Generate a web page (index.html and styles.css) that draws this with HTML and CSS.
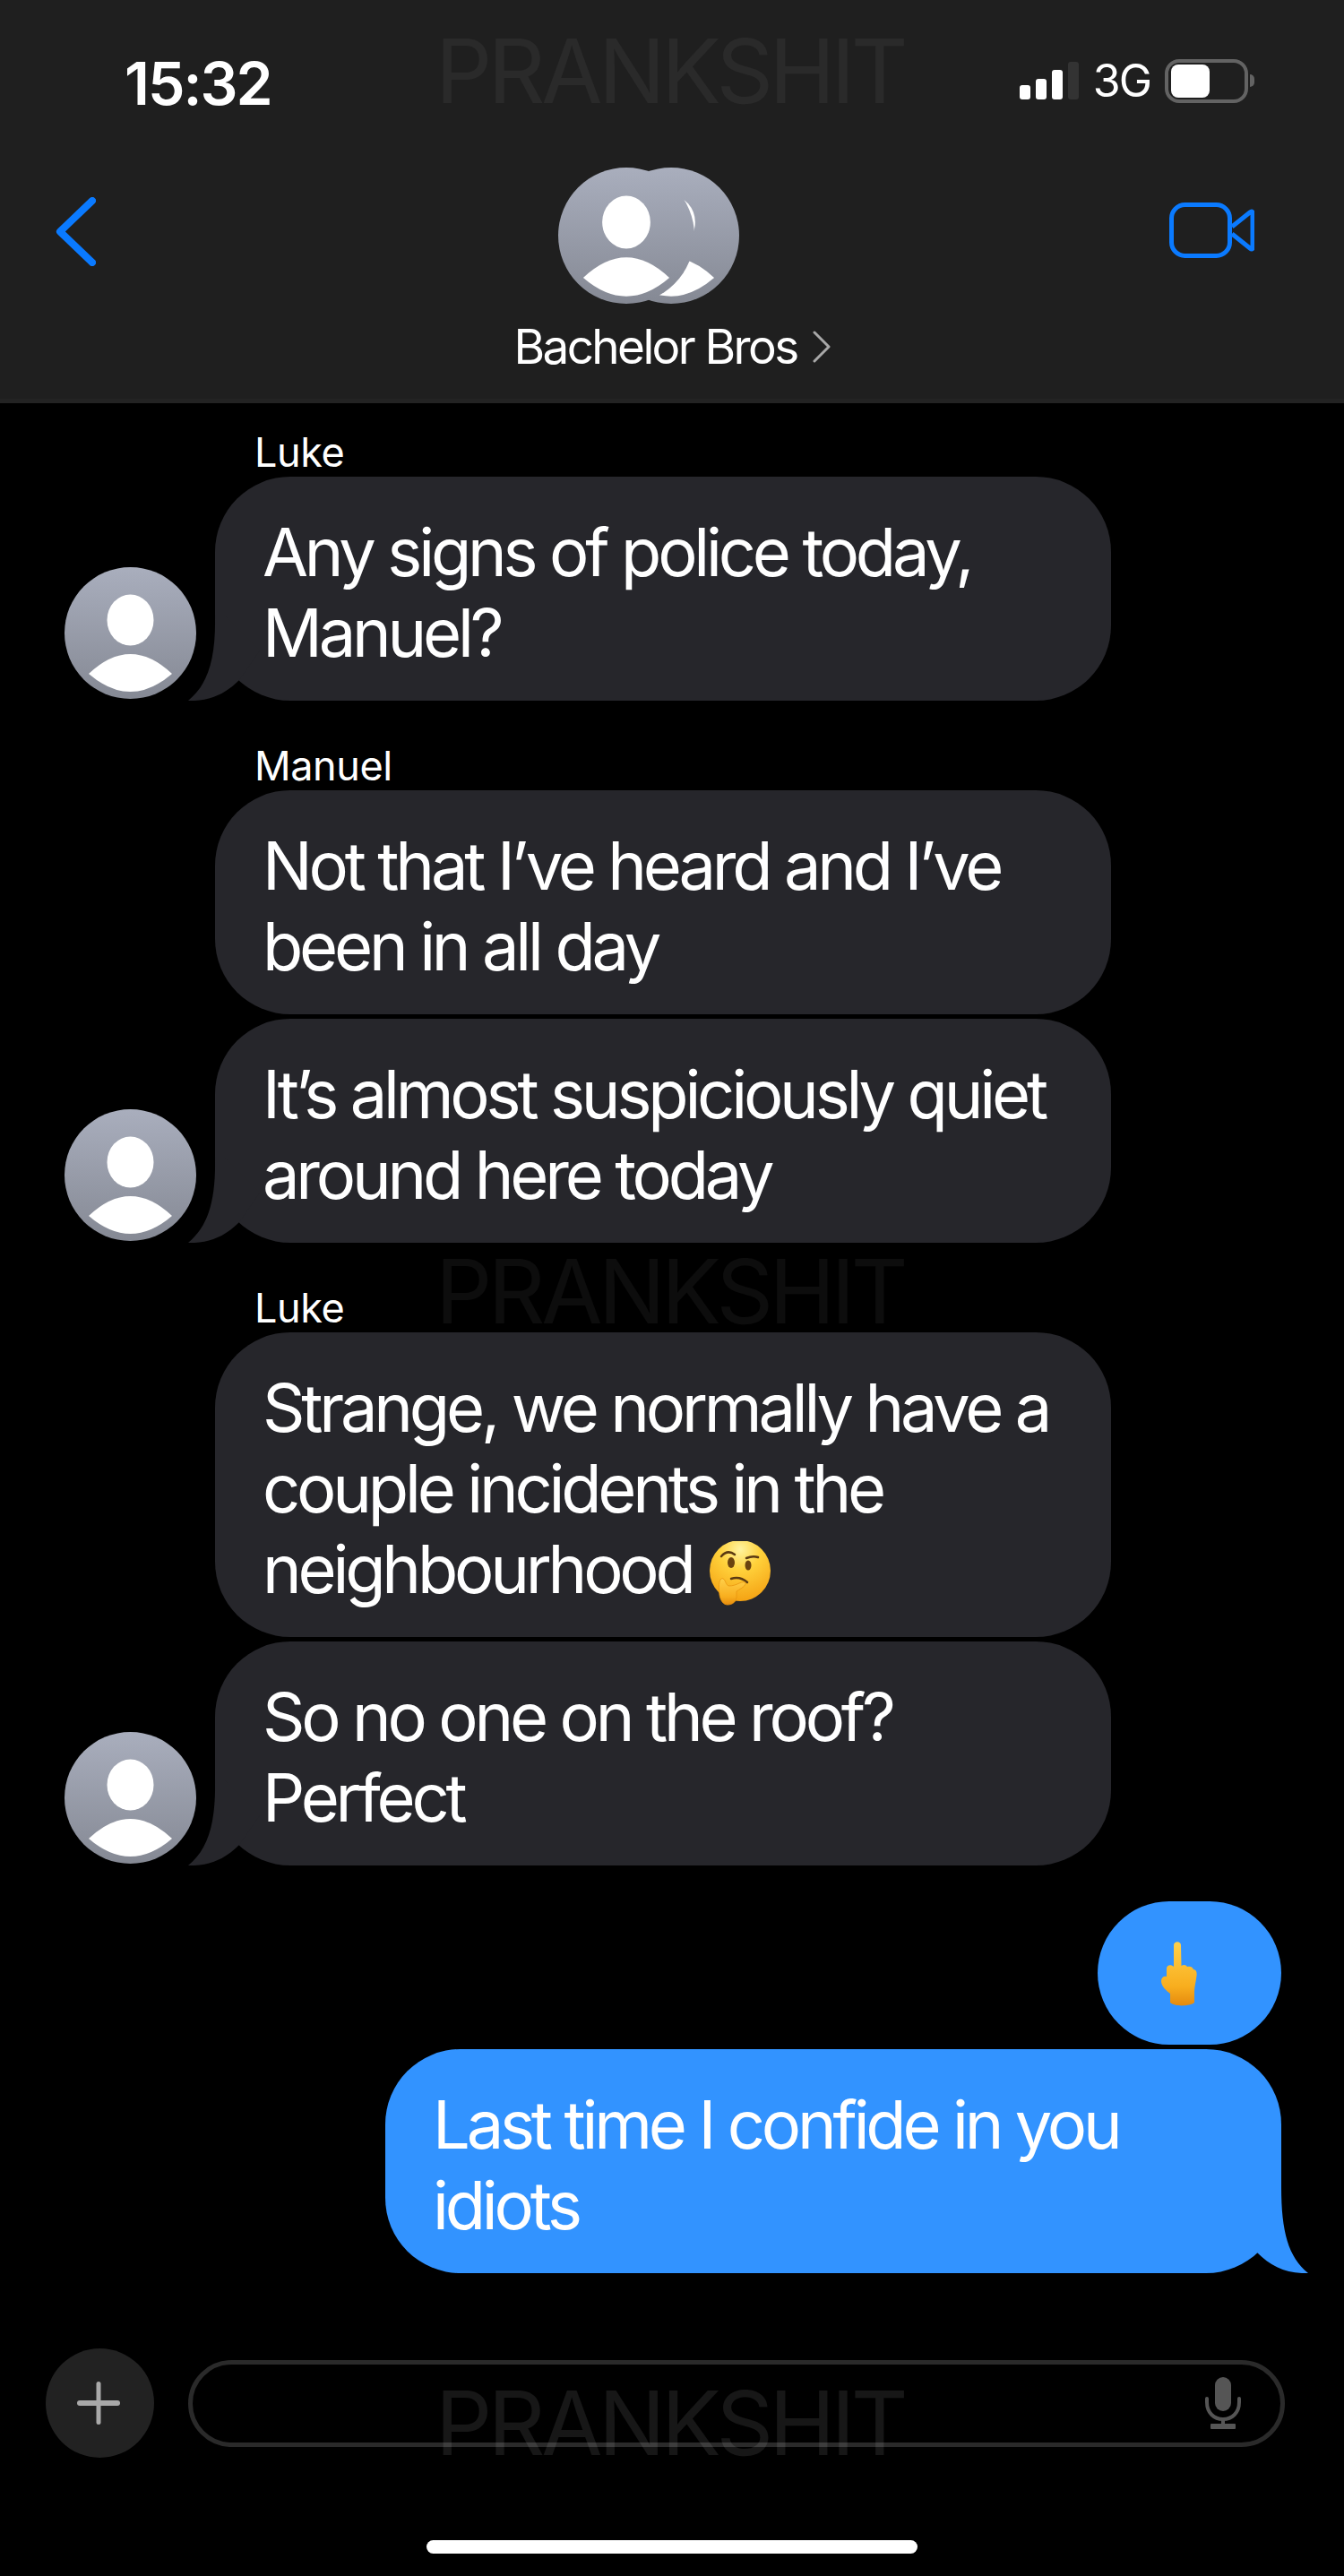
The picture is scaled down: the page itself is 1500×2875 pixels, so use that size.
FILE: index.html
```html
<!DOCTYPE html>
<html lang="en">
<head>
    <meta charset="UTF-8">
    <meta name="viewport" content="width=device-width, initial-scale=1.0">
    <title>Bachelor Bros</title>
    <link rel="stylesheet" href="styles.css">
</head>
<body>
    <svg class="defs" aria-hidden="true">
        <defs>
            <linearGradient id="avatarFill" x1="0" y1="0" x2="0" y2="1">
                <stop offset="0" stop-color="#a9aebd"/>
                <stop offset="1" stop-color="#858994"/>
            </linearGradient>
            <radialGradient id="faceFill" cx="0.5" cy="0.15" r="0.95">
                <stop offset="0" stop-color="#fff3a0"/>
                <stop offset="0.35" stop-color="#ffd23c"/>
                <stop offset="1" stop-color="#f39a0c"/>
            </radialGradient>
            <linearGradient id="handFill" x1="0" y1="0" x2="0" y2="1">
                <stop offset="0" stop-color="#ffd04a"/>
                <stop offset="0.7" stop-color="#f8ae1e"/>
                <stop offset="1" stop-color="#e58a0e"/>
            </linearGradient>
            <symbol id="person" viewBox="0 0 147 147">
                <circle cx="73.5" cy="73.5" r="73.5" fill="url(#avatarFill)"/>
                <ellipse cx="73.5" cy="59" rx="26" ry="28.5" fill="#fff"/>
                <path d="M27 119 Q73.5 75 120 119 Q73.5 159 27 119 Z" fill="#fff"/>
            </symbol>
        </defs>
    </svg>

    <div class="page">
        <div class="watermark wm-top">PRANKSHIT</div>
        <div class="watermark wm-mid">PRANKSHIT</div>
        <div class="watermark wm-bottom">PRANKSHIT</div>

        <header class="header">
            <div class="status-bar">
                <span class="clock">15:32</span>
                <div class="status-right">
                    <div class="signal">
                        <i class="bar bar-1"></i>
                        <i class="bar bar-2"></i>
                        <i class="bar bar-3"></i>
                        <i class="bar bar-4"></i>
                    </div>
                    <span class="network">3G</span>
                    <div class="battery"><div class="battery-level"></div></div>
                    <div class="battery-nub"></div>
                </div>
            </div>
            <div class="nav">
                <svg class="back" viewBox="0 0 45 77">
                    <path d="M41 4 L5 38.500 L41 73" fill="none" stroke="#0a7aff" stroke-width="8" stroke-linecap="round" stroke-linejoin="round"/>
                </svg>
                <div class="contact">
                    <svg class="group-avatar" viewBox="0 0 202 152">
                        <use href="#person" x="50" y="0" width="152" height="152"/>
                        <use href="#person" x="0" y="0" width="152" height="152"/>
                    </svg>
                    <div class="contact-name">
                        Bachelor Bros
                        <svg class="name-chevron" viewBox="0 0 20 36">
                            <path d="M2 2 L18 18 L2 34" fill="none" stroke="#a8a8a8" stroke-width="3" stroke-linecap="round" stroke-linejoin="round"/>
                        </svg>
                    </div>
                </div>
                <svg class="video" viewBox="0 0 95 62">
                    <rect x="2.500" y="2.500" width="65" height="57" rx="15" fill="none" stroke="#0a7aff" stroke-width="5"/>
                    <path d="M70 27 L90 11 Q93 8.500 93 12 L93 50 Q93 53.500 90 51 L70 35" fill="none" stroke="#0a7aff" stroke-width="5" stroke-linejoin="round"/>
                </svg>
            </div>
        </header>

        <main class="messages">
            <section class="group">
                <div class="sender">Luke</div>
                <div class="row">
                    <svg class="avatar"><use href="#person"/></svg>
                    <div class="bubble bubble-in">
                        Any signs of police today,<br>Manuel?
                        <svg class="tail" viewBox="0 0 80 96"><path d="M30 0 C31 50 22 78 0 96 C24 97 42 88 57 73 L80 40 L40 0 Z" fill="#26262b"/></svg>
                    </div>
                </div>
            </section>

            <section class="group">
                <div class="sender">Manuel</div>
                <div class="row row-plain">
                    <div class="bubble bubble-in">Not that I’ve heard and I’ve<br>been in all day</div>
                </div>
                <div class="row">
                    <svg class="avatar"><use href="#person"/></svg>
                    <div class="bubble bubble-in">
                        It’s almost suspiciously quiet<br>around here today
                        <svg class="tail" viewBox="0 0 80 96"><path d="M30 0 C31 50 22 78 0 96 C24 97 42 88 57 73 L80 40 L40 0 Z" fill="#26262b"/></svg>
                    </div>
                </div>
            </section>

            <section class="group">
                <div class="sender">Luke</div>
                <div class="row row-plain">
                    <div class="bubble bubble-in">
                        Strange, we normally have a<br>couple incidents in the<br>neighbourhood
                        <svg class="emoji-think" viewBox="0 0 70 72" role="img" aria-label="thinking face">
                            <circle cx="35" cy="33" r="34" fill="url(#faceFill)"/>
                            <path d="M14 17 Q21 9 29 15" fill="none" stroke="#5b3a12" stroke-width="2.500" stroke-linecap="round"/>
                            <path d="M42 19 Q49 16 55 18" fill="none" stroke="#5b3a12" stroke-width="2.500" stroke-linecap="round"/>
                            <ellipse cx="25" cy="24" rx="4" ry="6" fill="#6b430f"/>
                            <ellipse cx="44" cy="27" rx="3.500" ry="5.500" fill="#6b430f"/>
                            <path d="M25 42 Q35 39 43 46" fill="none" stroke="#5b3a12" stroke-width="2.500" stroke-linecap="round"/>
                            <path d="M14 42 C11 44 11 52 12 60 C13 66 16 71 21 71 C26 71 31 68 31 62 L31 56 C34 54 40 51 41 48 C42 45 38 45 34 47 C30 49 26 50 23 50 C20 50 19 46 18 44 C17 42 15 41 14 42 Z" fill="url(#handFill)" stroke="#e8960f" stroke-width="0.800"/>
                        </svg>
                    </div>
                </div>
                <div class="row">
                    <svg class="avatar"><use href="#person"/></svg>
                    <div class="bubble bubble-in">
                        So no one on the roof?<br>Perfect
                        <svg class="tail" viewBox="0 0 80 96"><path d="M30 0 C31 50 22 78 0 96 C24 97 42 88 57 73 L80 40 L40 0 Z" fill="#26262b"/></svg>
                    </div>
                </div>
            </section>

            <section class="group-out">
                <div class="bubble bubble-out bubble-emoji">
                    <svg class="emoji-finger" viewBox="0 0 40 72" role="img" aria-label="middle finger">
                        <path d="M14 4 C14 -1 22 -1 22 4 L22.500 27 C25 25 28 26 29 28 C32 27 35 28 36 31 C39 31 40 34 39.500 38 C39 44 37 50 37 56 L37 68 C33 72 15 73 10 68 L10 58 C6 55 0 50 0 44 C0 40 3 38 6 39 L6 30 C6 26 11 25 14 28 Z" fill="url(#handFill)"/>
                    </svg>
                </div>
                <div class="bubble bubble-out">
                    Last time I confide in you<br>idiots
                    <svg class="tail-out" viewBox="0 0 80 96"><path d="M50 0 C50 50 58 78 80 96 C56 97 38 88 23 73 L0 40 L40 0 Z" fill="#3293ff"/></svg>
                </div>
            </section>
        </main>

        <footer class="composer">
            <div class="plus-btn">
                <svg class="plus-icon" viewBox="0 0 48 48">
                    <rect x="21.500" y="0" width="5" height="48" rx="2.500" fill="#a9a9a9"/>
                    <rect x="0" y="21" width="48" height="6" rx="3" fill="#a9a9a9"/>
                </svg>
            </div>
            <div class="input-field">
                <svg class="mic" viewBox="0 0 42 58">
                    <rect x="12" y="0" width="18" height="38" rx="9" fill="#555"/>
                    <path d="M3 24 V28 C3 40 11 47 21 47 C31 47 39 40 39 28 V24" fill="none" stroke="#555" stroke-width="4" stroke-linecap="round"/>
                    <rect x="19" y="46" width="4" height="8" fill="#555"/>
                    <rect x="7" y="52" width="28" height="6" rx="1" fill="#555"/>
                </svg>
            </div>
        </footer>
        <div class="home-bar"></div>
    </div>
</body>
</html>
```

FILE: styles.css
```css
body {
    margin: 0;
    background-color: #000;
    font-family: Inter, 'Liberation Sans', sans-serif;
    color: #fff;
}

.defs {
    position: absolute;
    width: 0;
    height: 0;
}

.page {
    position: relative;
    display: flex;
    flex-direction: column;
    width: 1500px;
    height: 2875px;
    overflow: hidden;
}

/* watermark */
.watermark {
    position: absolute;
    left: 486px;
    font-size: 99px;
    font-weight: 400;
    line-height: 100px;
    letter-spacing: -4.400px;
    white-space: nowrap;
    color: rgba(255, 255, 255, 0.05);
    z-index: 5;
}

.wm-top { top: 29px; }
.wm-mid { top: 1391px; }
.wm-bottom { top: 2654px; color: rgba(255, 255, 255, 0.09); }

/* header */
.header {
    height: 445px;
    background-color: #1f1f1f;
    border-bottom: 5px solid #232323;
}

.status-bar {
    display: flex;
    justify-content: space-between;
    align-items: center;
    height: 60px;
    padding: 60px 100px 0 139px;
}

.clock {
    position: relative;
    top: 3px;
    font-size: 66px;
    font-weight: 600;
    letter-spacing: -2px;
}

.status-right {
    display: flex;
    align-items: center;
}

.signal {
    display: flex;
    align-items: flex-end;
    gap: 6px;
    height: 42px;
    margin-right: 16px;
}

.bar {
    display: block;
    width: 12px;
    background-color: #fff;
    border-radius: 3px;
}

.bar-1 { height: 16px; }
.bar-2 { height: 23px; }
.bar-3 { height: 33px; }
.bar-4 { height: 42px; background-color: #333; }

.network {
    font-size: 50px;
    letter-spacing: -2px;
    margin-right: 16px;
}

.battery {
    box-sizing: border-box;
    width: 93px;
    height: 49px;
    padding: 2px 3px;
    border: 4px solid #636363;
    border-radius: 16px;
}

.battery-level {
    width: 43px;
    height: 37px;
    background-color: #fff;
    border-radius: 8px;
}

.battery-nub {
    width: 5px;
    height: 14px;
    margin-left: 2px;
    background-color: #636363;
    border-radius: 0 7px 7px 0;
}

.nav {
    display: grid;
    grid-template-columns: 1fr auto 1fr;
    align-items: center;
    padding: 0 62px;
    margin-top: 67px;
}

.back {
    width: 45px;
    height: 77px;
    margin-top: -88px;
}

.video {
    justify-self: end;
    width: 95px;
    height: 62px;
    margin-top: -90px;
    margin-right: 38px;
}

.contact {
    display: flex;
    flex-direction: column;
    align-items: center;
}

.group-avatar {
    width: 202px;
    height: 152px;
    margin-right: 52px;
}

.contact-name {
    display: flex;
    align-items: center;
    gap: 17px;
    height: 60px;
    margin-top: 18px;
    font-size: 53px;
    letter-spacing: -2.600px;
}

.name-chevron {
    width: 20px;
    height: 36px;
}

/* messages */
.messages {
    display: flex;
    flex-direction: column;
    gap: 50px;
    padding-top: 32px;
}

.group {
    display: flex;
    flex-direction: column;
    gap: 5px;
}

.row {
    display: flex;
    align-items: flex-end;
    gap: 21px;
    padding-left: 72px;
}

.row-plain {
    padding-left: 240px;
}

.sender {
    height: 50px;
    margin-bottom: -5px;
    padding-left: 284px;
    font-size: 45px;
    line-height: 46px;
    letter-spacing: -0.400px;
}

.bubble {
    position: relative;
    box-sizing: border-box;
    padding: 39px 53px 31px;
    border-radius: 84px;
    font-size: 74px;
    line-height: 90px;
    letter-spacing: -4.200px;
}

.bubble-in {
    width: 1000px;
    background-color: #26262b;
}

.avatar {
    flex: none;
    width: 147px;
    height: 147px;
    margin-bottom: 2px;
}

.tail {
    position: absolute;
    left: -30px;
    bottom: 0;
    width: 80px;
    height: 96px;
}

.tail-out {
    position: absolute;
    right: -30px;
    bottom: 0;
    width: 80px;
    height: 96px;
}

.group-out {
    display: flex;
    flex-direction: column;
    align-items: flex-end;
    gap: 5px;
    margin-top: -10px;
    padding-right: 70px;
}

.bubble-out {
    width: 1000px;
    background-color: #3293ff;
}

.bubble-emoji {
    display: flex;
    width: 205px;
    height: 160px;
    padding: 45px 0 0 71px;
    border-radius: 80px;
}

.emoji-finger {
    width: 40px;
    height: 72px;
}

.emoji-think {
    width: 70px;
    height: 72px;
    margin-left: 2px;
    vertical-align: -14px;
}

/* composer */
.composer {
    display: flex;
    align-items: center;
    gap: 38px;
    height: 122px;
    margin-top: auto;
    padding: 0 66px 0 51px;
}

.plus-btn {
    display: flex;
    justify-content: center;
    align-items: center;
    flex: none;
    width: 121px;
    height: 122px;
    padding-right: 3px;
    box-sizing: border-box;
    background-color: #222;
    border-radius: 50%;
}

.plus-icon {
    width: 48px;
    height: 48px;
}

.input-field {
    display: flex;
    justify-content: flex-end;
    align-items: center;
    box-sizing: border-box;
    flex: 1;
    height: 97px;
    padding-right: 43px;
    border: 5px solid #2a2a2a;
    border-radius: 49px;
}

.mic {
    width: 42px;
    height: 58px;
}

.home-bar {
    width: 548px;
    height: 15px;
    margin: 92px auto 25px;
    background-color: #fff;
    border-radius: 8px;
}
```
